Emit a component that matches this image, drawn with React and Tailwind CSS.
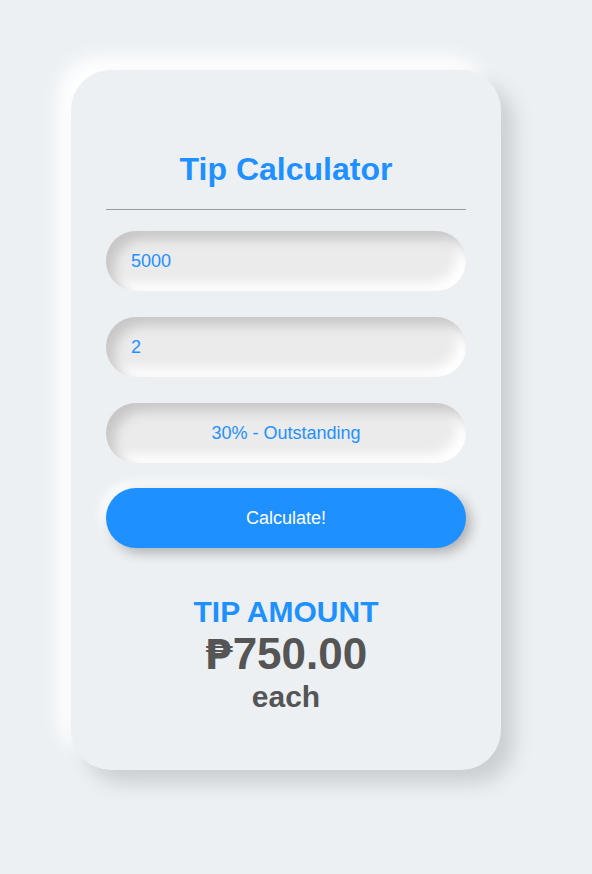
import React from "react";

export default function App() {
  return (
    <div className="min-h-[874px] w-full bg-[#ecf0f3] pt-[70px] pl-[71px] font-['Liberation_Sans',Arial,sans-serif]">
      <div className="w-[430px] h-[700px] rounded-[40px] bg-[#ecf0f3] shadow-[13px_13px_20px_#cbced1,-13px_-13px_20px_#ffffff] px-[35px] pt-[79px] flex flex-col">
        <h1 className="text-center text-[32px] leading-[40px] font-bold text-[#1e90ff]">Tip Calculator</h1>
        <div className="mt-[20px] h-px bg-[#9a9a9a]" />
        <input
          defaultValue="5000"
          className="mt-[21px] h-[60px] w-[360px] rounded-full bg-[#ebebeb] pl-[25px] text-[18px] text-[#1e90ff] outline-none shadow-[inset_8px_8px_12px_#c8c6c6,inset_-8px_-8px_12px_#ffffff]"
        />
        <input
          defaultValue="2"
          className="mt-[26px] h-[60px] w-[360px] rounded-full bg-[#ebebeb] pl-[25px] text-[18px] text-[#1e90ff] outline-none shadow-[inset_8px_8px_12px_#c8c6c6,inset_-8px_-8px_12px_#ffffff]"
        />
        <div className="mt-[26px] h-[60px] w-[360px] rounded-full bg-[#ebebeb] flex items-center justify-center text-[18px] text-[#1e90ff] shadow-[inset_8px_8px_12px_#c8c6c6,inset_-8px_-8px_12px_#ffffff]">
          30% - Outstanding
        </div>
        <button className="mt-[25px] h-[60px] w-[360px] rounded-full bg-[#1e90ff] text-white text-[18px] shadow-[5px_5px_12px_#b1b1b1,-5px_-5px_12px_#ffffff]">
          Calculate!
        </button>
        <div className="mt-[46px] text-center text-[30px] leading-[36px] font-bold text-[#1e90ff]">TIP AMOUNT</div>
        <div className="text-center text-[44px] leading-[48px] font-bold text-[#555555]">
          <span className="font-['DejaVu_Sans',sans-serif] text-[40px]">₱</span>750.00
        </div>
        <div className="text-center text-[30px] leading-[36px] font-bold text-[#555555]">each</div>
      </div>
    </div>
  );
}
